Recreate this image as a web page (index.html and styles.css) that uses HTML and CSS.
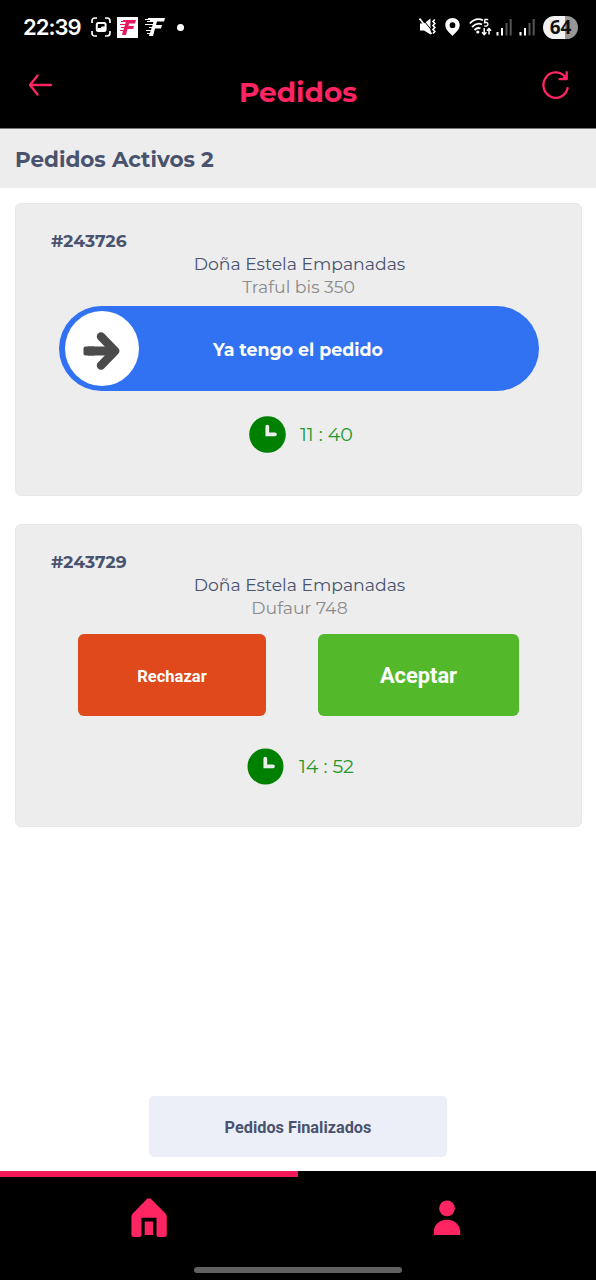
FILE: index.html
```html
<!DOCTYPE html>
<html lang="es">
<head>
<meta charset="utf-8">
<title>Pedidos</title>
<link rel="stylesheet" href="styles.css">
</head>
<body>
<div class="screen">
  <div class="status">
    <span class="time">22:39</span>
    <svg class="capture" width="20" height="20" viewBox="0 0 20 20" fill="none" stroke="#fff" stroke-width="1.7">
      <path d="M1 6V4Q1 1 4 1H6M14 1H16Q19 1 19 4V6M19 14V16Q19 19 16 19H14M6 19H4Q1 19 1 16V14"/>
      <rect x="5.8" y="6" width="8.8" height="8" rx="1.5" stroke-width="2"/>
      <path d="M7 11H9.500L11 9.500H14V14H7Z" fill="#fff" stroke="none"/>
    </svg>
    <svg class="app" width="21" height="21" viewBox="0 0 21 21">
      <path fill="#fff" d="M0 0H21V21H0Z"/>
      <path fill="#e51b61" d="M6 3H19L18 6.5H12L11.5 9H17L16 12H10.5L9 18H5L6 14H3V13H6.500L7 11H4V10H7.300L8 8H3V7H8.300L8.700 5H4V4H6Z"/>
    </svg>
    <svg class="fast" width="21" height="21" viewBox="0 0 21 21">
      <path fill="#fff" d="M4 1H21L20 4.500H13L12 8H18L17 11.500H11L9 19H5L5.500 17H3V16H6L6.500 14H2V13H7L7.500 11H5V10H8L8.500 8H1V7H9L9.300 5H3V4H6V3H1V2H4Z"/>
    </svg>
    <span class="dot"></span>
    <span class="grow"></span>
    <svg class="mute" width="18" height="20" viewBox="0 0 18 20" fill="none" stroke="#fff">
      <path d="M1 6.500H5L11.500 1.500V17.500L5 13.500H1Z" fill="#fff" stroke="none"/>
      <path d="M2.500 1 13 13.500" stroke="#000" stroke-width="1"/>
      <path d="M.5 1.500 12.500 17" stroke-width="1.700"/>
      <path d="M15.800 2.500 14 4.500 15.800 6.500 14 8.500 15.800 10.500 14 12.500 15.800 14.500 14 16.500" stroke-width="1.700"/>
    </svg>
    <svg class="pin" width="15" height="19" viewBox="0 0 15 19">
      <path fill="#fff" fill-rule="evenodd" d="M7.500 0C3.300 0 .3 3 .3 7 .3 11.500 4 14 7.500 18 11 14 14.700 11.500 14.700 7 14.700 3 11.700 0 7.500 0ZM7.500 4.300A2.900 2.900 0 1 1 7.500 10.100 2.900 2.900 0 1 1 7.500 4.300Z"/>
    </svg>
    <svg class="wifi" width="23" height="19" viewBox="0 0 23 19" fill="none" stroke="#fff" stroke-width="1.800">
      <path d="M.8 5.500Q7-1 14 2.300M3 9Q8 4 13 6.500M5.500 12Q8.500 9 11.500 10.500"/>
      <circle cx="8.800" cy="14" r="1.600" fill="#fff" stroke="none"/>
      <path d="M19.200 1.500H16L15.600 4.700Q19 3.900 18.900 6.400 18.600 8.700 15.200 7.900" stroke-width="1.400"/>
      <path d="M15.200 10V16.500M13 14.300 15.200 16.700 17.400 14.300M20 16.500V10.500M17.900 12.700 20 10.500 22.100 12.700" stroke-width="1.500"/>
    </svg>
    <svg class="signal" width="17" height="18" viewBox="0 0 17 18" fill="#fff">
      <path d="M.5 14H2.500V17.500H.5ZM5 10H7V17.500H5Z"/><path fill="#555" d="M9.500 5H11.500V17.500H9.500ZM13.700 1H15.700V17.500H13.700Z"/>
    </svg>
    <svg class="signal second" width="17" height="18" viewBox="0 0 17 18" fill="#fff">
      <path d="M.5 14H2.500V17.500H.5ZM5 10H7V17.500H5Z"/><path fill="#555" d="M9.500 5H11.500V17.500H9.500ZM13.700 1H15.700V17.500H13.700Z"/>
    </svg>
    <span class="battery">64</span>
  </div>

  <header class="header">
    <svg class="back" width="26" height="24" viewBox="0 0 26 24" fill="none" stroke="#ff2462" stroke-width="2.300" stroke-linecap="round" stroke-linejoin="round">
      <path d="M23 12H2M9.500 2.500 2 12 9.500 21.500"/>
    </svg>
    <h1 class="title"><span>Pedidos</span></h1>
    <svg class="reload" width="30" height="32" viewBox="0 0 30 32" fill="none" stroke="#ff2462" stroke-width="2.300" stroke-linecap="round" stroke-linejoin="round">
      <path d="M26.700 18A12.300 12.700 0 1 1 23.300 6L25.500 8.500M25.700 2.200V9.200H18.500"/><path d="M25.700 4V9.200H20Z" fill="#ff2462" stroke="none"/>
    </svg>
  </header>

  <div class="band"><span>Pedidos Activos 2</span></div>

  <main class="orders">
    <section class="card first">
      <div class="number">#243726</div>
      <div class="shop">Doña Estela Empanadas</div>
      <div class="address">Traful bis 350</div>
      <div class="slider">
        <span class="thumb">
          <svg width="38" height="40" viewBox="0 0 38 40" fill="none" stroke="#4b4b4b">
            <path d="M5 20H31" stroke-width="9"/>
            <path d="M18 5.500 32 20 18 34.500" stroke-width="8.500" stroke-linecap="round" stroke-linejoin="round"/>
            <rect x=".5" y="15.500" width="12" height="9" rx="2" fill="#4b4b4b" stroke="none"/>
          </svg>
        </span>
        <span class="slide-text">Ya tengo el pedido</span>
      </div>
      <div class="timer">
        <svg width="37" height="37" viewBox="0 0 37 37"><circle cx="18.500" cy="18.500" r="18.300" fill="#008000"/><path d="M18.300 10.500V18.300H26" fill="none" stroke="#eee" stroke-width="3.700" stroke-linecap="round"/></svg>
        <span class="count">11 : 40</span>
      </div>
    </section>

    <section class="card second-card">
      <div class="number">#243729</div>
      <div class="shop">Doña Estela Empanadas</div>
      <div class="address shifted">Dufaur 748</div>
      <div class="actions">
        <button class="reject">Rechazar</button>
        <button class="accept">Aceptar</button>
      </div>
      <div class="timer">
        <svg width="37" height="37" viewBox="0 0 37 37"><circle cx="18.500" cy="18.500" r="18" fill="#008000"/><path d="M18.300 10.500V18.300H26" fill="none" stroke="#eee" stroke-width="3.700" stroke-linecap="round"/></svg>
        <span class="count">14 : 52</span>
      </div>
    </section>
  </main>

  <button class="finished">Pedidos Finalizados</button>

  <nav class="nav">
    <div class="indicator"></div>
    <div class="tabs">
      <svg width="36" height="40" viewBox="0 0 36 40" fill="#ff2462">
        <path d="M16.200.8Q18-.5 19.800.8L34.500 15.500Q35.800 17 35.800 19V36.500Q35.800 39 33.500 39H28Q25.500 39 25.500 36.500V19.700H10.500V36.500Q10.500 39 8 39H3Q.4 39 .4 36.500V19Q.4 17 1.700 15.500Z"/>
        <path d="M13.700 23.500H22V37H13.700Z"/>
      </svg>
      <svg width="28" height="36" viewBox="0 0 28 36" fill="#ff2462">
        <circle cx="14" cy="8.300" r="7.900"/><path d="M.8 35V31C1.500 24 7 19.700 14 19.700S26.500 24 27.200 31V35Z"/>
      </svg>
    </div>
    <div class="gesture"></div>
  </nav>
</div>
</body>
</html>
```

FILE: styles.css
```css
* { box-sizing: border-box; }
body { margin: 0; background: #fff; font-family: Montserrat, Inter, sans-serif; color: #49536e; }
button { border: 0; padding: 0; font-family: Roboto, sans-serif; font-weight: 700; }
svg { display: block; flex: none; }
.screen { width: 596px; height: 1280px; display: flex; flex-direction: column; align-items: stretch; overflow: hidden; }

.status { height: 54px; flex: none; background: #000; display: flex; align-items: center; padding: 0 18px 0 23px; }
.time { font: 600 22px/26px Inter, sans-serif; color: #fff; width: 68px; white-space: nowrap; letter-spacing: -1px; }
.app { margin-left: 6px; }
.fast { margin-left: 6px; }
.dot { width: 7px; height: 7px; border-radius: 50%; background: #fff; margin-left: 12px; }
.grow { flex: 1; }
.pin { margin-left: 8px; }
.wifi { margin-left: 9px; }
.signal { margin-left: 4px; }
.second { margin-left: 6px; }
.battery { margin-left: 7px; width: 35px; height: 23px; border-radius: 12px; background: linear-gradient(90deg, #f2f2f2 62%, #979797 62%); color: #111; font: 700 19px/23px "Open Sans", sans-serif; text-align: center; }

.header { height: 75px; flex: none; background: #000; display: grid; grid-template-columns: 54px 1fr 54px; border-bottom: 1px solid #777; }
.back { margin: 19px 0 0 28px; }
.title { margin: 0; padding-top: 20px; text-align: center; font-size: 28px; line-height: 36px; font-weight: 700; color: #ff2462; }
.reload { margin: 16px 0 0 -1px; }

.band { height: 59px; flex: none; background: #ededed; padding: 0 15px; font-size: 21.500px; font-weight: 700; line-height: 61px; }

.orders { padding: 15px 14px 0 15px; display: flex; flex-direction: column; gap: 28px; }
.card { background: #ededed; border: 1px solid #e7e7ed; border-radius: 6px; padding-top: 25px; font-size: 17.250px; line-height: 23px; text-align: center; }
.first { height: 293px; }
.second-card { height: 303px; }
.number { text-align: left; padding-left: 35px; font-weight: 700; font-size: 17.150px; }
.shop { padding-left: 2px; }
.address { color: #8b8b8b; }
.shifted { padding-left: 2px; }

.slider { margin: 8px 42px 0 43px; height: 85px; border-radius: 43px; background: #3072f1; display: flex; align-items: center; padding-left: 6px; }
.thumb { width: 74px; height: 75px; border-radius: 50%; background: #fff; display: flex; align-items: center; justify-content: center; padding-top: 5px; }
.slide-text { margin-left: 74px; padding-top: 1px; font-size: 17.400px; font-weight: 700; color: #fff; white-space: nowrap; }
.timer { margin-top: 25px; padding-left: 233px; display: flex; align-items: center; gap: 14px; }
.count { padding-top: 0; font-size: 19px; line-height: 24px; color: #25982b; white-space: nowrap; }

.actions { margin-top: 15px; padding-left: 62px; display: flex; gap: 52px; }
.reject, .accept { height: 82px; border-radius: 6px; color: #fff; }
.reject { width: 188px; background: #df491b; font-size: 16.500px; padding-top: 2px; }
.accept { width: 201px; background: #53b92a; font-size: 21.800px; padding-top: 1px; }
.second-card .timer { margin-top: 32px; padding-left: 231px; gap: 15px; }

.finished { flex: none; width: 298px; height: 61px; margin: auto auto 14px 149px; border-radius: 5px; background: #eceff8; color: #49536e; font-size: 16.300px; padding-top: 1px; }
.nav { height: 109px; flex: none; background: #000; display: flex; flex-direction: column; }
.indicator { width: 298px; height: 6px; background: #f5195a; }
.tabs { display: grid; grid-template-columns: 1fr 1fr; align-items: center; justify-items: center; height: 82px; }
.gesture { width: 208px; height: 6px; border-radius: 3px; background: #606060; margin: 8px auto 0 194px; }
```
